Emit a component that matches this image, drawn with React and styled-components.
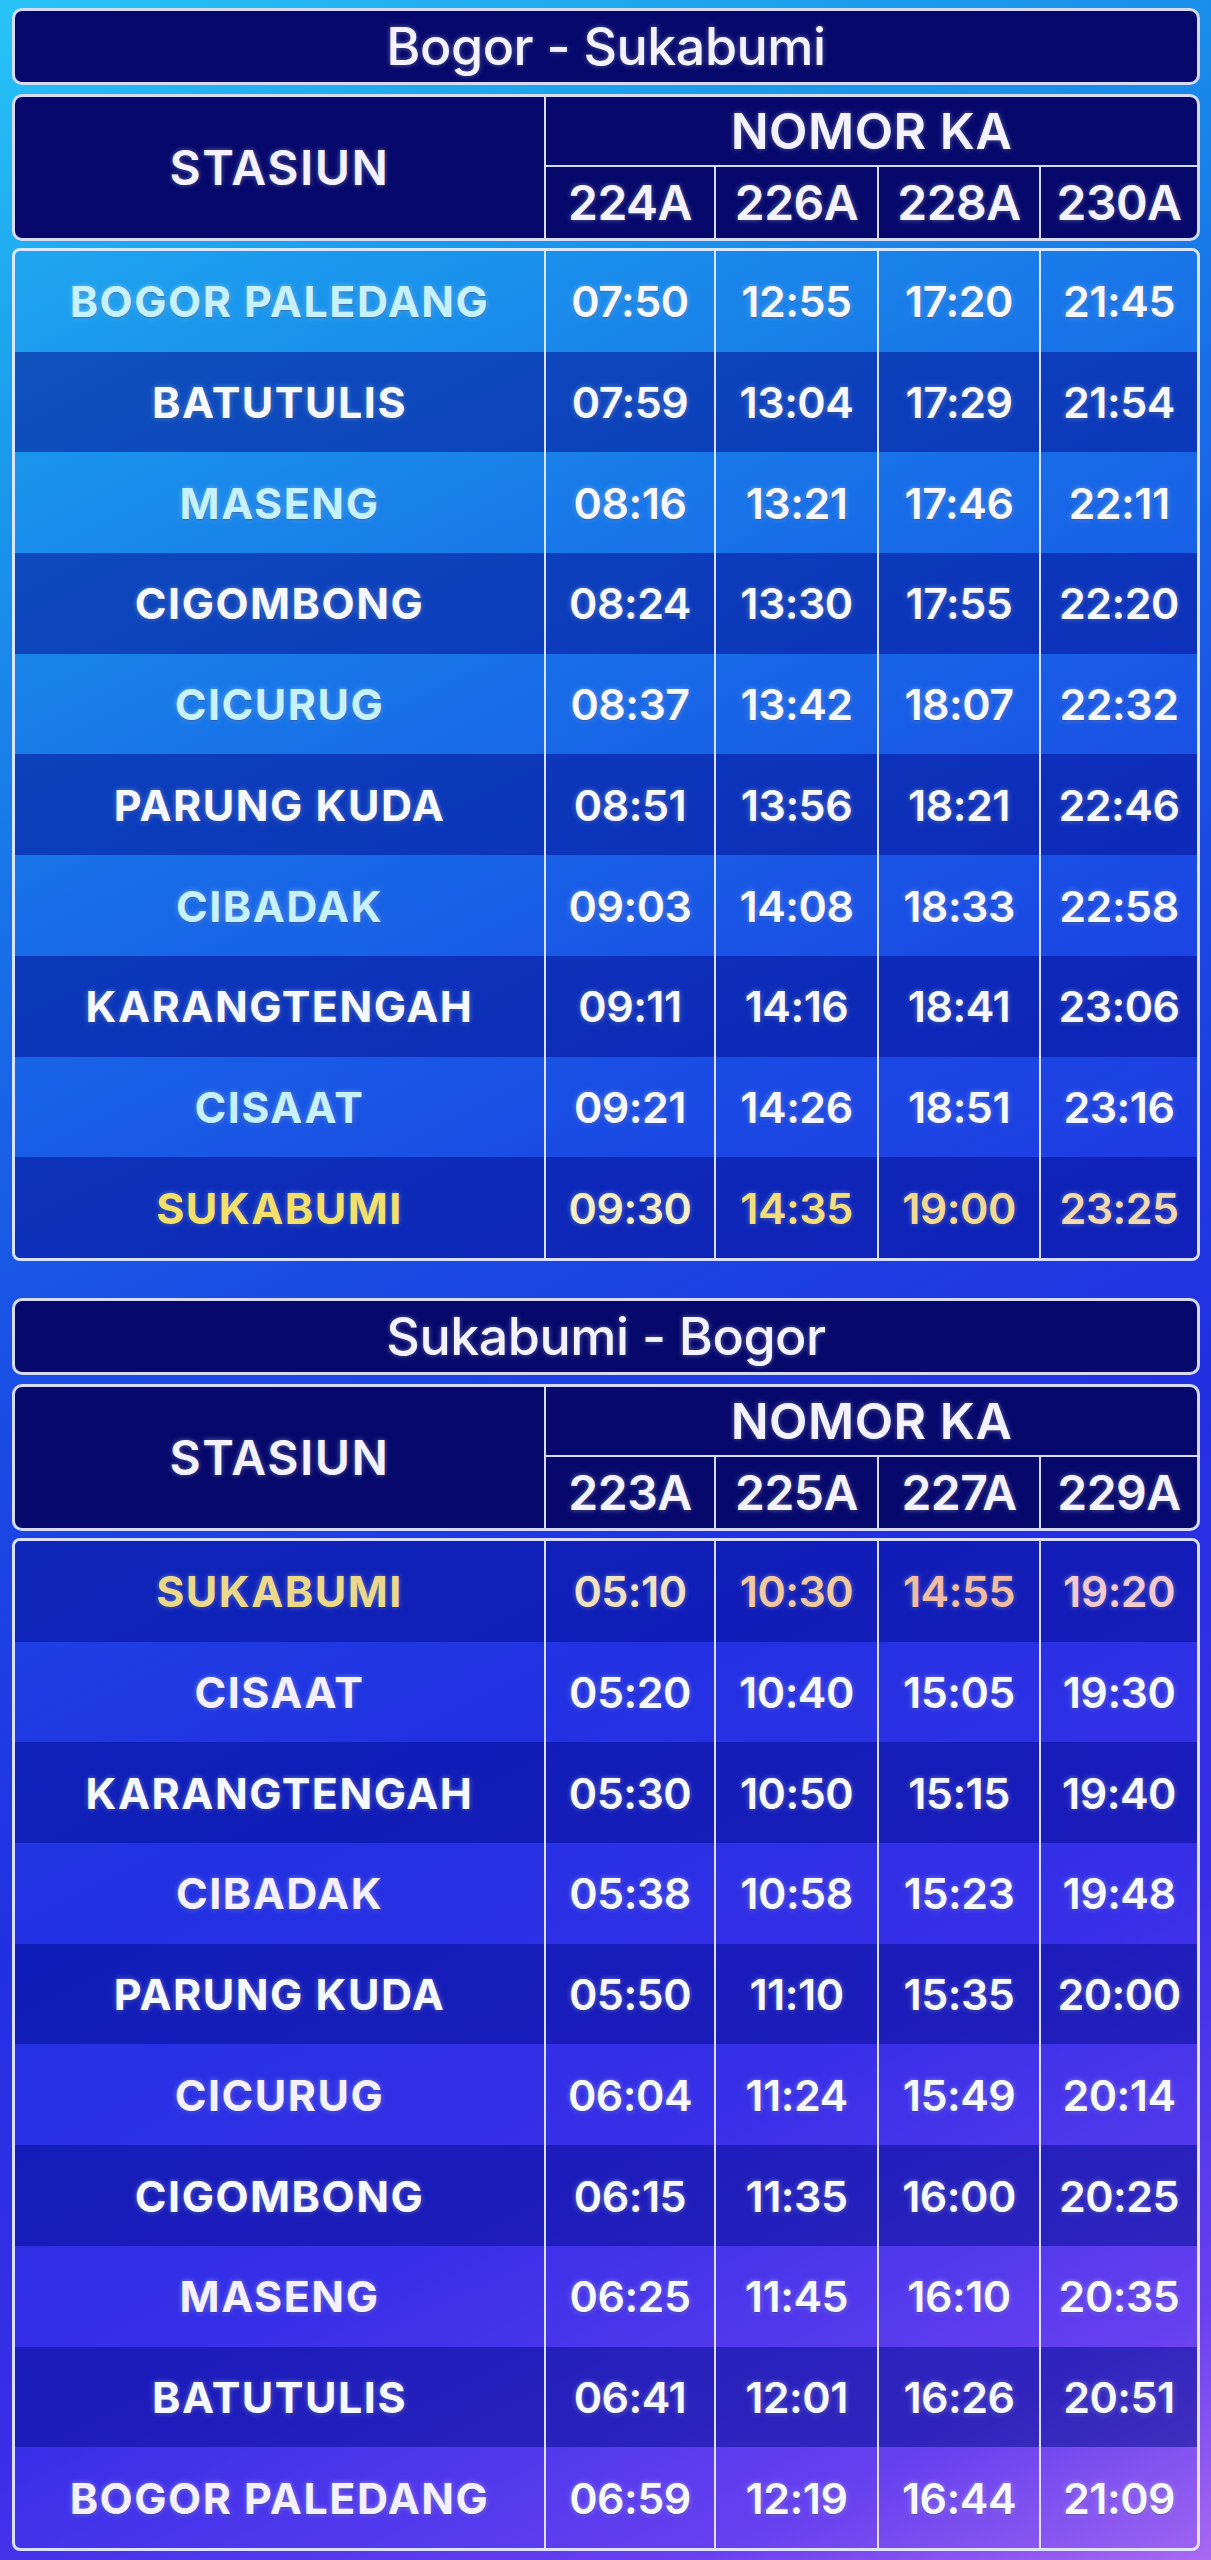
import React from 'react';
import styled, { createGlobalStyle, css } from 'styled-components';

const GlobalStyle = createGlobalStyle`
  html, body {
    margin: 0;
    padding: 0;
  }
  body {
    font-family: Inter, "Noto Sans", "Liberation Sans", sans-serif;
    background: #1a6ee8;
  }
`;

const schedules = [
  {
    title: 'Bogor - Sukabumi',
    trains: ['224A', '226A', '228A', '230A'],
    tint: '#c6f2ff',
    gold: ['#f2e06a', '#f4eec8', '#f2de7c', '#f2d890', '#f2d8b0'],
    darkOdd: true,
    rows: [
      ['BOGOR PALEDANG', '07:50', '12:55', '17:20', '21:45'],
      ['BATUTULIS', '07:59', '13:04', '17:29', '21:54'],
      ['MASENG', '08:16', '13:21', '17:46', '22:11'],
      ['CIGOMBONG', '08:24', '13:30', '17:55', '22:20'],
      ['CICURUG', '08:37', '13:42', '18:07', '22:32'],
      ['PARUNG KUDA', '08:51', '13:56', '18:21', '22:46'],
      ['CIBADAK', '09:03', '14:08', '18:33', '22:58'],
      ['KARANGTENGAH', '09:11', '14:16', '18:41', '23:06'],
      ['CISAAT', '09:21', '14:26', '18:51', '23:16'],
      ['SUKABUMI', '09:30', '14:35', '19:00', '23:25'],
    ],
    goldRow: 9,
  },
  {
    title: 'Sukabumi - Bogor',
    trains: ['223A', '225A', '227A', '229A'],
    tint: '#f4f0ff',
    gold: ['#ecd88a', '#f2e2c4', '#f2c8a2', '#f2bca4', '#f2c8d2'],
    darkOdd: false,
    rows: [
      ['SUKABUMI', '05:10', '10:30', '14:55', '19:20'],
      ['CISAAT', '05:20', '10:40', '15:05', '19:30'],
      ['KARANGTENGAH', '05:30', '10:50', '15:15', '19:40'],
      ['CIBADAK', '05:38', '10:58', '15:23', '19:48'],
      ['PARUNG KUDA', '05:50', '11:10', '15:35', '20:00'],
      ['CICURUG', '06:04', '11:24', '15:49', '20:14'],
      ['CIGOMBONG', '06:15', '11:35', '16:00', '20:25'],
      ['MASENG', '06:25', '11:45', '16:10', '20:35'],
      ['BATUTULIS', '06:41', '12:01', '16:26', '20:51'],
      ['BOGOR PALEDANG', '06:59', '12:19', '16:44', '21:09'],
    ],
    goldRow: 0,
  },
];

const COLS = '529px 170px 163px 162px 1fr';
const LINE = 'rgba(232, 238, 255, 0.92)';

const Page = styled.div`
  box-sizing: border-box;
  width: 1211px;
  height: 2560px;
  padding: 8px 11px 9px 12px;
  display: flex;
  flex-direction: column;
  gap: 37px;
  background: linear-gradient(
    154deg,
    #28c4f8 0%,
    #1a9cec 14%,
    #1870e8 30%,
    #1a4ae4 46%,
    #2230e2 62%,
    #3a2ee8 78%,
    #6a40f0 92%,
    #a868f2 100%
  );
`;

const Section = styled.section`
  display: flex;
  flex-direction: column;
`;

const glow = css`
  text-shadow: 0 0 5px rgba(210, 230, 255, 0.45), 0 1px 2px rgba(0, 0, 40, 0.45);
`;

const TitleBar = styled.div`
  box-sizing: border-box;
  height: 77px;
  border: 3px solid ${LINE};
  border-radius: 10px;
  background: #07086c;
  display: flex;
  align-items: center;
  justify-content: center;
  color: #f4f2ff;
  font-size: 52px;
  font-weight: 500;
  letter-spacing: -0.5px;
  ${glow}
`;

const Header = styled.div`
  box-sizing: border-box;
  margin-top: 9px;
  height: 147px;
  border: 3px solid ${LINE};
  border-radius: 10px;
  background: #07086c;
  display: grid;
  grid-template-columns: ${COLS};
  grid-template-rows: 70px 1fr;
  overflow: hidden;
  color: #f4f2ff;
  ${glow}
`;

const StationHead = styled.div`
  grid-row: 1 / span 2;
  display: flex;
  align-items: center;
  justify-content: center;
  font-size: 48px;
  font-weight: 600;
  letter-spacing: 1.5px;
`;

const NumberHead = styled.div`
  grid-column: 2 / span 4;
  border-left: 2px solid ${LINE};
  border-bottom: 2px solid ${LINE};
  display: flex;
  align-items: center;
  justify-content: center;
  font-size: 50px;
  font-weight: 600;
  letter-spacing: 0.5px;
`;

const TrainNo = styled.div`
  border-left: 2px solid ${LINE};
  display: flex;
  align-items: center;
  justify-content: center;
  font-size: 48px;
  font-weight: 600;
  letter-spacing: -0.5px;
`;

const Body = styled.div`
  box-sizing: border-box;
  margin-top: 7px;
  height: 1013px;
  border: 3px solid ${LINE};
  border-radius: 8px;
  display: grid;
  grid-template-columns: ${COLS};
  grid-template-rows: repeat(10, 1fr);
  overflow: hidden;
`;

const Cell = styled.div`
  display: flex;
  align-items: center;
  justify-content: center;
  background: ${({ $dark }) => ($dark ? 'rgba(4, 14, 150, 0.55)' : 'rgba(30, 60, 230, 0.06)')};
  border-left: ${({ $first }) => ($first ? 'none' : `2px solid ${LINE}`)};
  color: ${({ $color }) => $color};
  ${glow}
`;

const Station = styled(Cell)`
  font-size: 43px;
  font-weight: 700;
  letter-spacing: 1.5px;
`;

const Time = styled(Cell)`
  font-size: 43px;
  font-weight: 600;
  letter-spacing: -0.5px;
`;

function Schedule({ data }) {
  return (
    <Section>
      <TitleBar>{data.title}</TitleBar>
      <Header>
        <StationHead>STASIUN</StationHead>
        <NumberHead>NOMOR KA</NumberHead>
        {data.trains.map((t) => (
          <TrainNo key={t}>{t}</TrainNo>
        ))}
      </Header>
      <Body>
        {data.rows.map((row, i) => {
          const dark = data.darkOdd ? i % 2 === 1 : i % 2 === 0;
          const gold = i === data.goldRow;
          return row.map((val, j) => {
            const color = gold ? data.gold[j] : j === 0 && !dark ? data.tint : '#f6f8ff';
            return j === 0 ? (
              <Station key={`${i}-${j}`} $first $dark={dark} $color={color}>
                {val}
              </Station>
            ) : (
              <Time key={`${i}-${j}`} $dark={dark} $color={color}>
                {val}
              </Time>
            );
          });
        })}
      </Body>
    </Section>
  );
}

export default function App() {
  return (
    <>
      <GlobalStyle />
      <Page>
        {schedules.map((s) => (
          <Schedule key={s.title} data={s} />
        ))}
      </Page>
    </>
  );
}
